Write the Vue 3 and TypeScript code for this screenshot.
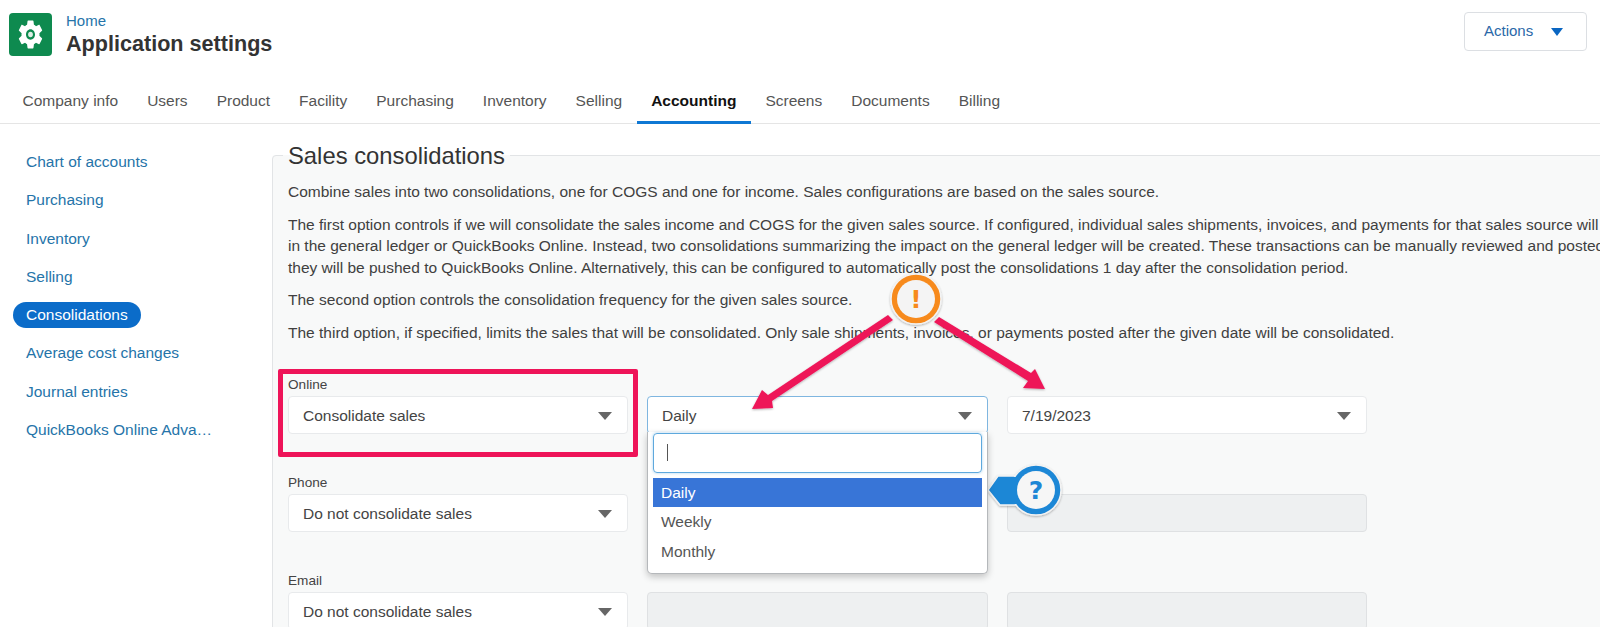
<script setup lang="ts">
import { ref } from "vue"

// Header tabs
const tabs = ['Company info', 'Users', 'Product', 'Facility', 'Purchasing', 'Inventory', 'Selling', 'Accounting', 'Screens', 'Documents', 'Billing']
const activeTab = ref('Accounting')

// Sidebar links
const links = ['Chart of accounts', 'Purchasing', 'Inventory', 'Selling', 'Consolidations', 'Average cost changes', 'Journal entries', 'QuickBooks Online Advanced']
const activeLink = ref('Consolidations')

interface SourceRow {
  label: string
  mode: string
  frequency?: string
  date?: string
}

const rows: SourceRow[] = [
  { label: 'Online', mode: 'Consolidate sales', frequency: 'Daily', date: '7/19/2023' },
  { label: 'Phone', mode: 'Do not consolidate sales' },
  { label: 'Email', mode: 'Do not consolidate sales' }
]

const frequencies = ['Daily', 'Weekly', 'Monthly']
</script>

<template>
  <div class="page">
    <header class="header">
      <div class="app-icon">
        <svg viewBox="2 2 20 20" width="25" height="29" preserveAspectRatio="none">
          <path fill="#fff" fill-rule="evenodd" d="M19.14,12.94c0.04-0.3,0.06-0.61,0.06-0.94c0-0.32-0.02-0.64-0.07-0.94l2.03-1.58c0.18-0.14,0.23-0.41,0.12-0.61 l-1.92-3.32c-0.12-0.22-0.37-0.29-0.59-0.22l-2.39,0.96c-0.5-0.38-1.03-0.7-1.62-0.94L14.4,2.81c-0.04-0.24-0.24-0.41-0.48-0.41 h-3.84c-0.24,0-0.43,0.17-0.47,0.41L9.25,5.35C8.66,5.59,8.12,5.92,7.63,6.29L5.24,5.33c-0.22-0.08-0.47,0-0.59,0.22L2.74,8.87 C2.62,9.08,2.66,9.34,2.86,9.48l2.03,1.58C4.84,11.36,4.8,11.69,4.8,12s0.02,0.64,0.07,0.94l-2.03,1.58 c-0.18,0.14-0.23,0.41-0.12,0.61l1.92,3.32c0.12,0.22,0.37,0.29,0.59,0.22l2.39-0.96c0.5,0.38,1.03,0.7,1.62,0.94l0.36,2.54 c0.05,0.24,0.24,0.41,0.48,0.41h3.84c0.24,0,0.44-0.17,0.47-0.41l0.36-2.54c0.59-0.24,1.13-0.56,1.62-0.94l2.39,0.96 c0.22,0.08,0.47,0,0.59-0.22l1.92-3.32c0.12-0.22,0.07-0.47-0.12-0.61L19.14,12.94z M12,15.6c-1.98,0-3.6-1.62-3.6-3.6 s1.62-3.6,3.6-3.6s3.6,1.62,3.6,3.6S13.98,15.6,12,15.6z" />
          <circle cx="12" cy="12" r="1.9" fill="#dfeee6" />
        </svg>
      </div>
      <div class="titles">
        <a class="home">Home</a>
        <h1>Application settings</h1>
      </div>
      <button class="actions">Actions <i class="caret blue"></i></button>
    </header>

    <nav class="tabs">
      <a v-for="tab in tabs" :key="tab" class="tab" :class="{ active: tab === activeTab }">{{ tab }}</a>
    </nav>

    <div class="content">
      <aside class="sidebar">
        <a v-for="link in links" :key="link" class="side-link" :class="{ active: link === activeLink }">
          <span>{{ link }}</span>
        </a>
      </aside>

      <fieldset class="panel">
        <legend>Sales consolidations</legend>
        <p>Combine sales into two consolidations, one for COGS and one for income. Sales configurations are based on the sales source.</p>
        <p>The first option controls if we will consolidate the sales income and COGS for the given sales source. If configured, individual sales shipments, invoices, and payments for that sales source will not be posted<br />in the general ledger or QuickBooks Online. Instead, two consolidations summarizing the impact on the general ledger will be created. These transactions can be manually reviewed and posted before<br />they will be pushed to QuickBooks Online. Alternatively, this can be configured to automatically post the consolidations 1 day after the consolidation period.</p>
        <p>The second option controls the consolidation frequency for the given sales source.</p>
        <p>The third option, if specified, limits the sales that will be consolidated. Only sale shipments, invoices, or payments posted after the given date will be consolidated.</p>

        <div class="source-rows">
          <div v-for="(row, i) in rows" :key="row.label" class="source-row">
            <div class="cell">
              <div v-if="i === 0" class="red-box"></div>
              <label>{{ row.label }}</label>
              <div class="select"><span>{{ row.mode }}</span><i class="caret"></i></div>
            </div>
            <div class="cell">
              <div v-if="row.frequency" class="select open">
                <span>{{ row.frequency }}</span><i class="caret"></i>
                <div class="dropdown">
                  <div class="search"><b class="cursor"></b></div>
                  <ul>
                    <li v-for="f in frequencies" :key="f" :class="{ selected: f === row.frequency }">{{ f }}</li>
                  </ul>
                </div>
              </div>
              <div v-else class="select disabled"></div>
            </div>
            <div class="cell">
              <div v-if="row.date" class="select"><span>{{ row.date }}</span><i class="caret"></i></div>
              <div v-else class="select disabled"></div>
            </div>
          </div>
        </div>
      </fieldset>
    </div>

    <!-- callouts drawn over the screenshot -->
    <svg class="callouts" width="1600" height="627" viewBox="0 0 1600 627">
      <defs>
        <filter id="soft" x="-30%" y="-30%" width="160%" height="160%">
          <feDropShadow dx="0" dy="1" stdDeviation="1.2" flood-color="#000" flood-opacity="0.3" />
        </filter>
      </defs>
      <g fill="#ee1459" filter="url(#soft)">
        <polygon points="752,409 762,390 768,395 888,315 893,320 772,401 773,408" />
        <polygon points="1045,389 1023,388 1028,381 934,322 939,317 1031,373 1035,369" />
      </g>
      <g filter="url(#soft)">
        <circle cx="916" cy="299" r="25" fill="#f78a1d" stroke="#f3f3f3" stroke-width="1.5" />
        <circle cx="916" cy="299" r="19" fill="#f4f4f4" />
      </g>
      <text x="916" y="308" class="mark" fill="#f78a1d">!</text>
      <g filter="url(#soft)">
        <polygon points="988,490 998,476 1030,476 1030,505 1000,505" fill="#1f87d6" stroke="#f3f3f3" stroke-width="1.5" />
        <circle cx="1036" cy="490" r="25" fill="#1f87d6" stroke="#f3f3f3" stroke-width="1.5" />
        <polygon points="990,490 999,477 1030,477 1030,504 1001,504" fill="#1f87d6" />
        <circle cx="1036" cy="490" r="19" fill="#f6f6f6" />
      </g>
      <text x="1036" y="499" class="mark" fill="#1f87d6">?</text>
    </svg>
  </div>
</template>

<style scoped>
.page {
  position: relative;
  width: 1600px;
  height: 627px;
  overflow: hidden;
  background: #fff;
  color: #3e3e3c;
  font-family: "Liberation Sans", Arial, sans-serif;
  font-size: 15.5px;
}

/* header */
.header {
  display: flex;
  align-items: flex-start;
  height: 79px;
  padding: 12px 13px 0 9px;
  box-sizing: border-box;
}

.app-icon {
  width: 43px;
  height: 43px;
  margin-top: 1px;
  border-radius: 4px;
  background: #0e8a4f;
  display: flex;
  align-items: center;
  justify-content: center;
}

.titles {
  margin-left: 14px;
  flex: 1;
}

.home {
  display: block;
  color: #2574a9;
  font-size: 15px;
  line-height: 18px;
}

h1 {
  margin: 1px 0 0;
  font-size: 21.6px;
  line-height: 25px;
  font-weight: 700;
  color: #333;
}

.actions {
  width: 123px;
  height: 39px;
  display: flex;
  align-items: center;
  padding: 0 0 2px 19px;
  background: #fff;
  border: 1px solid #dcdfe3;
  border-radius: 4px;
  color: #2a68a8;
  font: inherit;
  font-size: 15px;
}

.actions .caret {
  margin: 2px 0 0 18px;
}

/* tabs */
.tabs {
  display: flex;
  height: 44px;
  padding-left: 8px;
  border-bottom: 1px solid #e5e5e5;
}

.tab {
  box-sizing: border-box;
  height: 45px;
  padding: 13px 14.5px 0;
  line-height: 17px;
  border-bottom: 3px solid transparent;
  color: #555;
}

.tab.active {
  color: #111;
  font-weight: 700;
  border-bottom-color: #0f78d4;
}

/* sidebar and panel */
.content {
  display: flex;
  width: 1900px;
}

.sidebar {
  width: 272px;
  flex: none;
  padding-top: 25px;
  box-sizing: border-box;
}

.side-link {
  display: block;
  width: 200px;
  height: 38.3px;
  padding-left: 13px;
  color: #2574a9;
  line-height: 26px;
  white-space: nowrap;
  overflow: hidden;
  text-overflow: ellipsis;
}

.side-link span {
  padding: 0 13px;
}

.side-link.active span {
  display: inline-block;
  height: 26px;
  border-radius: 13px;
  background: #0b6cc9;
  color: #fff;
}

.panel {
  flex: none;
  width: 1500px;
  margin: 18.5px 0 0;
  padding: 12.5px 15px 0;
  background: #f8f9f9;
  border: 1px solid #e2e4e6;
  border-radius: 4px;
  box-sizing: border-box;
  min-width: 0;
}

legend {
  padding: 0 5px;
  margin-left: -5px;
  font-size: 23.8px;
  line-height: 26px;
  color: #333;
}

p {
  margin: 0 0 11px;
  line-height: 21.5px;
  white-space: nowrap;
  color: #404040;
}

.source-rows {
  margin-top: 33.5px;
}

.source-row {
  display: grid;
  grid-template-columns: 340px 341px 360px;
  column-gap: 19px;
  height: 98px;
  align-items: start;
}

.cell {
  position: relative;
  padding-top: 19px;
}

label {
  position: absolute;
  top: 0;
  left: 0;
  font-size: 13.6px;
  line-height: 16px;
  color: #444;
}

.select {
  position: relative;
  height: 38px;
  box-sizing: border-box;
  padding: 2px 15px 0 14px;
  display: flex;
  align-items: center;
  justify-content: space-between;
  background: #fff;
  border: 1px solid #e8eaec;
  border-radius: 4px;
  color: #444;
}

.select.open {
  border-color: #7fb6e0;
}

.select.disabled {
  background: #eef0f1;
  border-color: #dfe1e3;
}

.caret {
  display: block;
  width: 0;
  height: 0;
  border-left: 7px solid transparent;
  border-right: 7px solid transparent;
  border-top: 8px solid #666;
}

.caret.blue {
  border-left-width: 6.5px;
  border-right-width: 6.5px;
  border-top-color: #0a66c2;
}

.red-box {
  position: absolute;
  top: -8px;
  left: -10px;
  width: 360px;
  height: 88px;
  box-sizing: border-box;
  border: 5px solid #ee1459;
  border-radius: 2px;
}

/* open frequency list */
.dropdown {
  position: absolute;
  z-index: 2;
  top: 35px;
  left: -1px;
  right: -1px;
  height: 142px;
  box-sizing: border-box;
  padding: 1px 5px 0;
  background: #fff;
  border: 1px solid #b5b8bb;
  border-top: none;
  border-radius: 0 0 5px 5px;
  box-shadow: 0 3px 7px rgba(0, 0, 0, 0.22);
}

.search {
  height: 40px;
  box-sizing: border-box;
  padding: 10px 13px;
  border: 1px solid #5ea9dd;
  border-radius: 4px;
  box-shadow: 0 0 3px rgba(80, 160, 220, 0.5);
}

.cursor {
  display: block;
  width: 1px;
  height: 17px;
  background: #555;
}

ul {
  list-style: none;
  margin: 5px 0 0;
  padding: 0;
}

li {
  height: 29.5px;
  line-height: 29.5px;
  padding-left: 8px;
  color: #555;
}

li.selected {
  background: #3875d7;
  color: #fff;
}

.callouts {
  position: absolute;
  top: 0;
  left: 0;
  pointer-events: none;
}

.mark {
  font-family: "DejaVu Sans", sans-serif;
  font-weight: 700;
  font-size: 25px;
  text-anchor: middle;
}
</style>
